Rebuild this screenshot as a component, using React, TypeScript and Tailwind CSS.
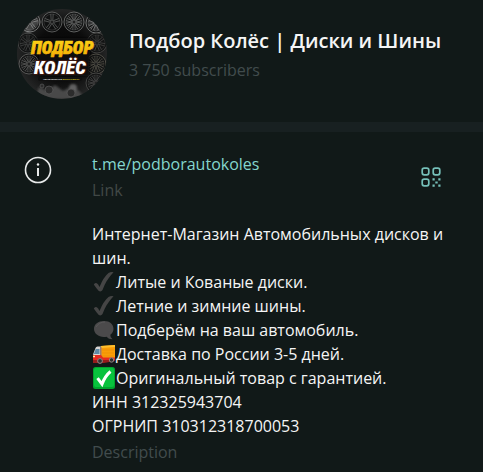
const wheels = [
  { x: 13, y: 13, r: 10, spokes: 5, color: '#8b8d8c' },
  { x: 35, y: 13, r: 10, spokes: 5, color: '#6c6e6d' },
  { x: 57, y: 13, r: 10, spokes: 10, color: '#777978' },
  { x: 79, y: 14, r: 10, spokes: 12, color: '#858786' },
  { x: 11, y: 34, r: 10, spokes: 7, color: '#4a4c4b' },
  { x: 80, y: 34, r: 10, spokes: 7, color: '#4b4b49' },
  { x: 12, y: 55, r: 10, spokes: 10, color: '#666665' },
  { x: 79, y: 55, r: 10, spokes: 9, color: '#5c5a50' },
  { x: 79, y: 74, r: 10, spokes: 10, color: '#4f4f4e' },
];

const lines = [
  { icon: 'check', text: 'Литые и Кованые диски.' },
  { icon: 'check', text: 'Летние и зимние шины.' },
  { icon: 'bubble', text: 'Подберём на ваш автомобиль.' },
  { icon: 'truck', text: 'Доставка по России 3-5 дней.' },
  { icon: 'done', text: 'Оригинальный товар с гарантией.' },
];

function Wheel({ x, y, r, spokes, color }: (typeof wheels)[number]) {
  return (
    <g transform={`translate(${x} ${y})`} stroke={color} fill="none">
      <circle r={r} fill="#101111" strokeWidth="1" />
      <circle r={r - 2} strokeWidth="0.6" opacity="0.6" />
      {Array.from({ length: spokes }, (_, i) => (
        <path key={i} d={`M-.8-1.5L-1.2-${r - 2}M.8-1.5L1.2-${r - 2}`} strokeWidth="0.8" transform={`rotate(${(360 / spokes) * i})`} />
      ))}
      <circle r="1.8" fill="#222" strokeWidth="0.6" />
    </g>
  );
}

function Avatar() {
  return (
    <svg viewBox="0 0 90 90" className="size-[90px] shrink-0" role="img" aria-label="Подбор Колёс">
      <defs>
        <clipPath id="round"><circle cx="45" cy="45" r="45" /></clipPath>
        <radialGradient id="shade">
          <stop offset="0" stopColor="#050505" />
          <stop offset="0.6" stopColor="#0c0c0c" />
          <stop offset="1" stopColor="#242525" />
        </radialGradient>
        <linearGradient id="gold" x2="0" y2="1">
          <stop offset="0" stopColor="#ffd81a" />
          <stop offset="1" stopColor="#f2ad05" />
        </linearGradient>
        <filter id="smoke"><feGaussianBlur stdDeviation="1.2" /></filter>
      </defs>
      <g clipPath="url(#round)">
        <rect width="90" height="90" fill="url(#shade)" />
        <g opacity="0.8">
          {wheels.map((w) => <Wheel key={`${w.x}-${w.y}`} {...w} />)}
        </g>
        <path d="M7 20L20 9L23 13L11 25Z" fill="#aaa" opacity="0.35" filter="url(#smoke)" />
        <path d="M19 29H74L72 67H22V49Z" fill="#080808" filter="url(#smoke)" />
        <g filter="url(#smoke)" fill="#4a4a4a">
          <path d="M18 90L22 78L30 82L38 76L46 82L55 77L62 82L68 90Z" />
          <circle cx="56" cy="79" r="4" fill="#606060" />
        </g>
        <g stroke="#5a5a5a" strokeWidth="0.7" fill="#2c2c2c">
          <circle cx="32" cy="81" r="4" />
          <circle cx="25" cy="77" r="2" />
          <circle cx="54" cy="84" r="4" />
        </g>
        <g fontFamily="'Roboto Condensed', 'Open Sans Condensed', Roboto, sans-serif" fontWeight="900" fontStyle="italic" strokeLinejoin="round">
          <text x="14" y="45" fontSize="18" fill="url(#gold)" stroke="url(#gold)" strokeWidth="0.7">ПОДБОР</text>
          <text x="17" y="65" fontSize="19" fill="#fff" stroke="#3b1710" strokeWidth="2" paintOrder="stroke">КОЛЁС</text>
        </g>
        <rect x="21" y="68" width="44" height="4" rx="2" fill="#101010" />
        <text x="26" y="71" fontFamily="'Liberation Sans', sans-serif" fontWeight="700" fontSize="2" fill="#eee">
          АВТОМОБИЛЬНЫЕ <tspan fill="#e5dc22">ДИСКИ И ШИНЫ</tspan>
        </text>
      </g>
    </svg>
  );
}

function LineIcon({ name }: { name: string }) {
  return (
    <svg viewBox="0 0 24 24" className="size-6 shrink-0" aria-hidden="true">
      {name === 'check' && <path d="M1.8 14.5Q2.8 12.3 4.8 13.2Q6.2 14 7.5 17Q11.5 7 16.5 3Q19 1.5 21.5 2.2Q14 10 10.5 20Q9 22.2 6.8 21Q4 18 1.8 14.5Z" fill="#454545" />}
      {name === 'bubble' && (
        <>
          <path d="M12 3C18 3 21.5 6.5 21.5 11C21.5 13.4 20 15.4 18.3 16.8Q18 19.3 20.5 21.2Q16.5 21.2 14.5 18.7C7.5 20 2 16 2 11C2 6.2 6.2 3 12 3Z" fill="#4b4a4b" />
          <path d="M4 9Q7 4 13 4" fill="none" stroke="#5d5c5d" strokeWidth="0.8" />
        </>
      )}
      {name === 'truck' && (
        <>
          <path d="M9 4L23 3V16L9 17Z" fill="#f99d08" />
          <path d="M9 4L23 3V5L9 6Z" fill="#ffc02d" />
          <path d="M10 8H22M10 11H22M10 14H22" stroke="#e98a05" strokeWidth="0.6" />
          <path d="M3.5 6Q4 4.5 5.5 4.5H9V14H1.2V12Z" fill="#d9d6d3" />
          <path d="M3.7 7H7.5V12H1.9Z" fill="#5f8aa5" />
          <path d="M8 5H9.5V17H8Z" fill="#9b7d72" />
          <path d="M1 13H9L11 15.5H23V18.5L12 20H1Z" fill="#e52920" />
          <path d="M1 18H23V19L12 21H1Z" fill="#951c1c" />
          <path d="M1 14.5H3" stroke="#fff4a0" strokeWidth="1.4" />
          <g fill="#303030" stroke="#8f8584" strokeWidth="1">
            <circle cx="8" cy="19" r="2.4" />
            <circle cx="19.5" cy="18" r="2.2" />
          </g>
        </>
      )}
      {name === 'done' && (
        <>
          <rect x="1" y="1" width="22" height="22" rx="2.5" fill="#00a52e" />
          <rect x="2" y="2" width="20" height="19" rx="2" fill="#08c23d" />
          <path d="M5.5 12.2L10 18.2Q13 10 18.5 5.5" fill="none" stroke="#fff" strokeWidth="3" />
        </>
      )}
    </svg>
  );
}

function QrIcon() {
  return (
    <svg viewBox="0 0 20 20" className="size-5" fill="none" stroke="#75bfb8" strokeWidth="1.7" aria-hidden="true">
      <rect x="1.2" y="1.2" width="6.6" height="6.6" rx="2" />
      <rect x="12.2" y="1.2" width="6.6" height="6.6" rx="2" />
      <rect x="1.2" y="12.2" width="6.6" height="6.6" rx="2" />
      <path d="M11.5 12.3h2.2M17.3 12.3h2.2M14.3 15.5h2.4M11.5 18.7h2.2M17.3 18.7h2.2" strokeWidth="2.2" />
    </svg>
  );
}

function App() {
  return (
    <main className="min-h-screen bg-[#111918] font-['Open_Sans','Noto_Sans',sans-serif] text-base leading-6 text-[#f5f5f5]">
      <header className="flex h-[122px] items-start gap-[22px] pl-[17px] pt-[9px]">
        <Avatar />
        <div className="pt-5">
          <h1 className="text-xl font-semibold leading-6 whitespace-nowrap">Подбор Колёс | Диски и Шины</h1>
          <p className="mt-[5px] text-[#414c4d]">3 750 subscribers</p>
        </div>
      </header>
      <div className="h-[10px] bg-[#182021]" />
      <section className="flex items-start pl-6 pr-6 pt-5">
        <svg viewBox="0 0 28 28" className="mt-1 size-7 shrink-0" fill="none" stroke="#e8eaea" aria-hidden="true">
          <circle cx="14" cy="14" r="12.5" strokeWidth="1.6" />
          <path d="M14 12v8" strokeWidth="2" />
          <circle cx="14" cy="8.5" r="1.2" fill="#e8eaea" stroke="none" />
        </svg>
        <div className="ml-10 min-w-0 flex-1">
          <div className="flex items-start justify-between pr-[18px]">
            <div>
              <a href="https://t.me/podborautokoles" className="text-[#84d6ce]">t.me/podborautokoles</a>
              <p className="mt-[2px] text-[#414846]">Link</p>
            </div>
            <button type="button" aria-label="QR" className="mt-[15px]"><QrIcon /></button>
          </div>
          <div className="mt-5">
            <p>Интернет-Магазин Автомобильных дисков и шин.</p>
            {lines.map((line) => (
              <p key={line.text} className="flex items-center whitespace-nowrap">
                <LineIcon name={line.icon} />
                {line.text}
              </p>
            ))}
            <p>ИНН 312325943704</p>
            <p>ОГРНИП 310312318700053</p>
          </div>
          <p className="mt-[2px] text-[#414c4d]">Description</p>
        </div>
      </section>
    </main>
  );
}

export default App;
